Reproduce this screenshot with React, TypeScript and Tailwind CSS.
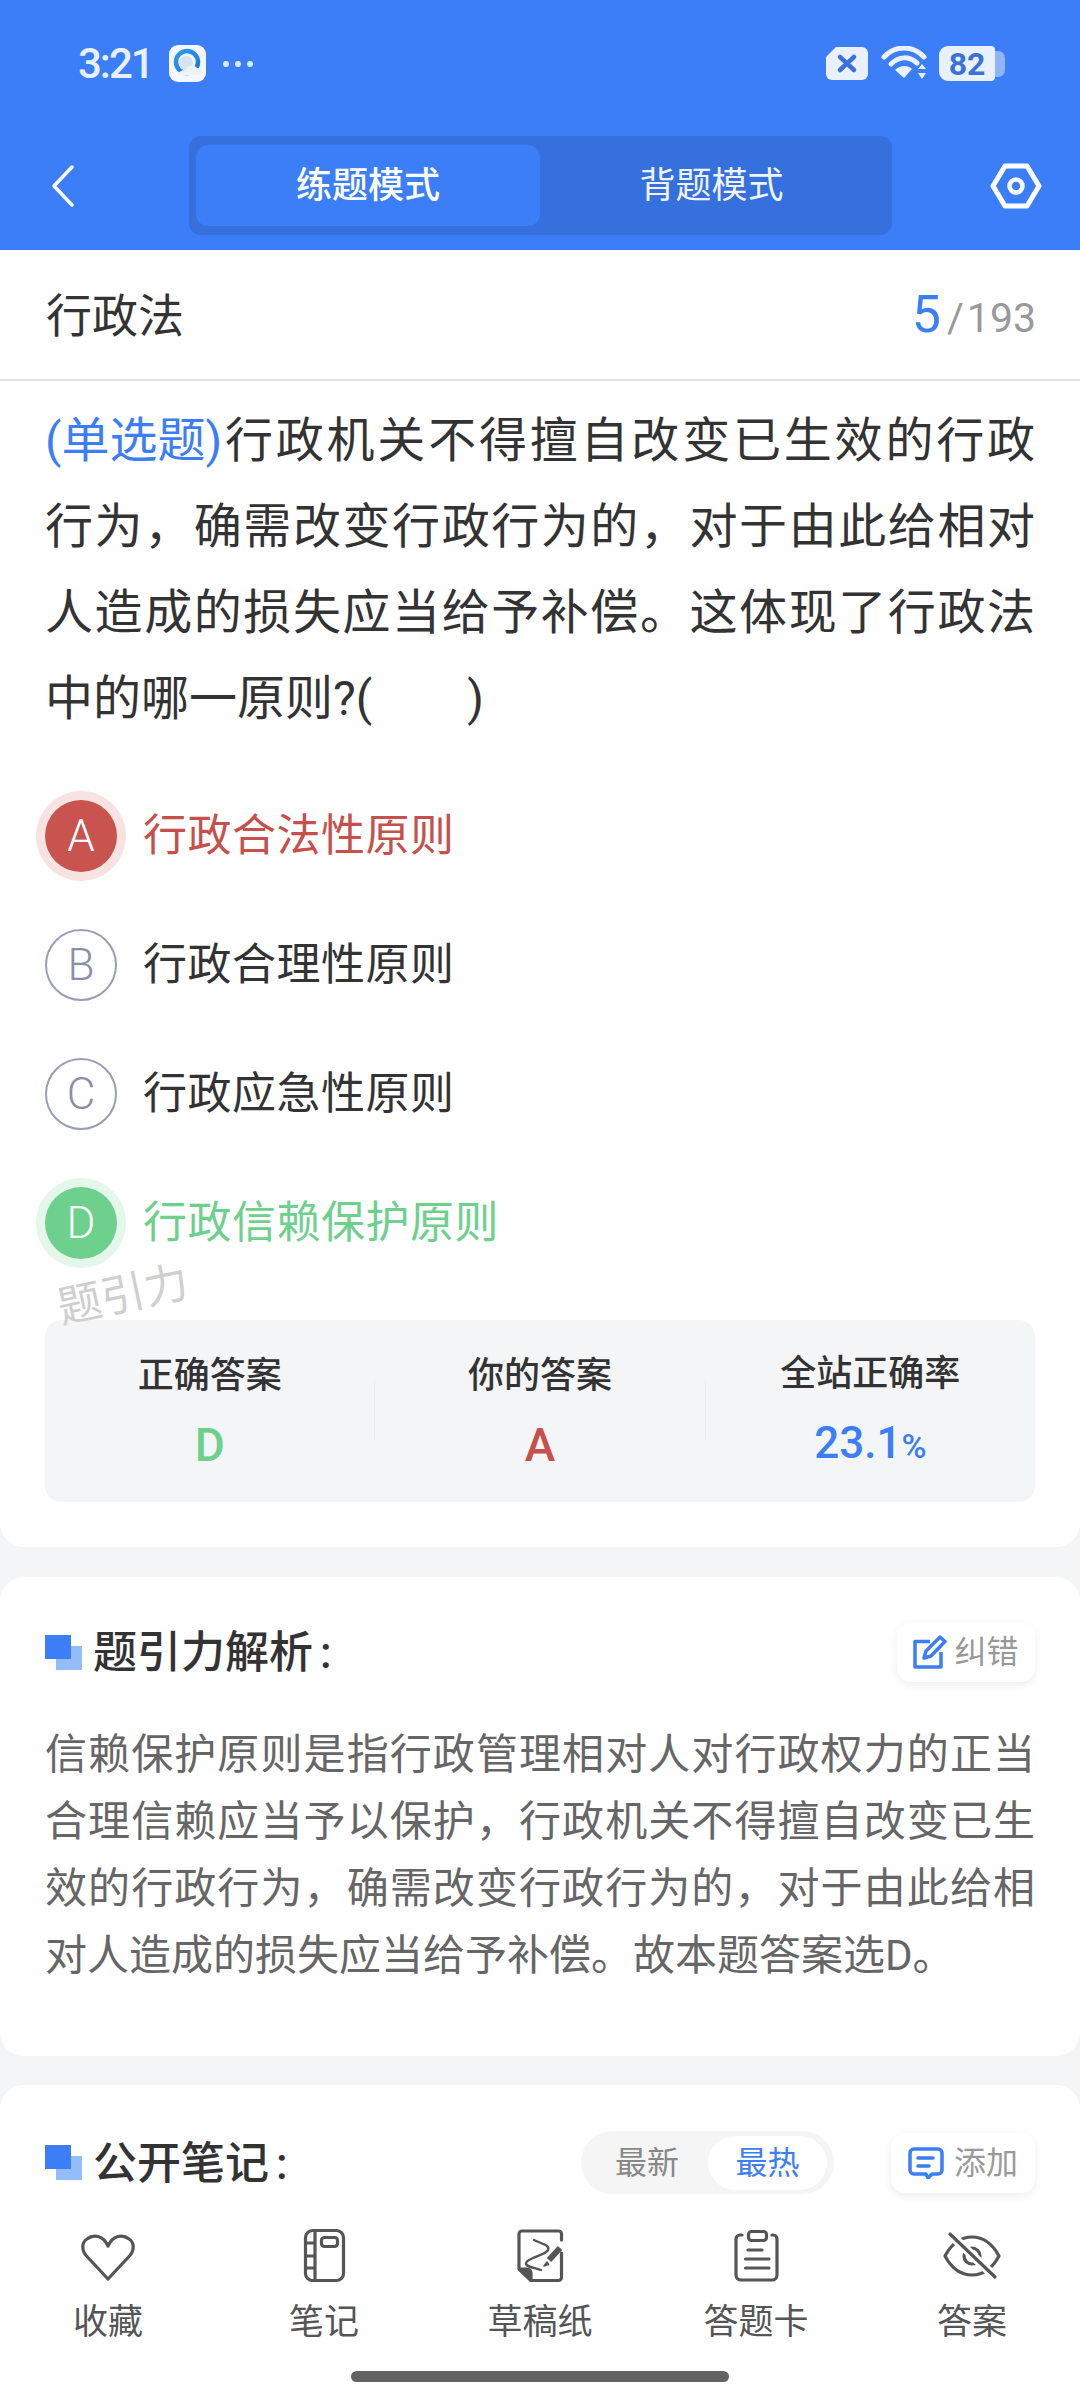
import React from "react";

const Squares = () => (
  <span className="relative block w-[37px] h-[35px] shrink-0">
    <span className="absolute left-[11px] top-[11px] w-[26px] h-[24px] bg-[#93BCFA]" />
    <span className="absolute left-0 top-0 w-[26px] h-[24px] bg-[#3B7EF7]" />
  </span>
);

const SectionTitle = ({ children }: { children: React.ReactNode }) => (
  <div className="flex items-center gap-[11px]">
    <Squares />
    <span className="mt-[2px] text-[44px] leading-[60px] font-medium text-[#333]">
      {children}
      <span className="ml-[7px]">:</span>
    </span>
  </div>
);

const OPTIONS = [
  { k: "A", t: "行政合法性原则", c: "bg-[#C9534F] text-white ring-[9px] ring-[#F6E3E2]", tc: "text-[#C5504C]" },
  { k: "B", t: "行政合理性原则", c: "border-2 border-[#9A9EB3] text-[#8B8FA6]", tc: "text-[#333]" },
  { k: "C", t: "行政应急性原则", c: "border-2 border-[#9A9EB3] text-[#8B8FA6]", tc: "text-[#333]" },
  { k: "D", t: "行政信赖保护原则", c: "bg-[#6ED08D] text-white ring-[9px] ring-[#E4F7EA]", tc: "text-[#6ED08D]" },
];

const Heart = () => (
  <svg width="60" height="60" viewBox="0 0 60 60" fill="none" stroke="#555" strokeWidth="3.2" strokeLinejoin="round">
    <path d="M30 54 L8.5 31 C3 25 4 17 9 14 C15 9 25 10 30 21 C35 10 45 9 51 14 C56 17 57 25 51.5 31 Z" />
  </svg>
);
const Notebook = () => (
  <svg width="60" height="60" viewBox="0 0 60 60" fill="none" stroke="#555" strokeWidth="3.2" strokeLinejoin="round">
    <rect x="11.5" y="5.5" width="38" height="50" rx="7" />
    <path d="M21 6V55M11.5 18H21M11.5 31H21M11.5 43H21" />
    <rect x="27.5" y="12.5" width="16" height="9" rx="3" />
  </svg>
);
const Sketch = () => (
  <svg width="60" height="60" viewBox="0 0 60 60" fill="none" stroke="#555" strokeWidth="3.2" strokeLinejoin="round" strokeLinecap="round">
    <path d="M51.5 15V9a3 3 0 0 0-3-3H12a3 3 0 0 0-3 3V44L21 55.500H48.500a3 3 0 0 0 3-3V28" />
    <path d="M9.500 44H17a4 4 0 0 1 4 4v7z" fill="#555" />
    <path d="M24 15C32 19 40 20 38 25C36 30 17 33 16 38C15 42 26 43 31 45" strokeWidth="2.4" />
    <path d="M50 23L39 35" strokeWidth="6" strokeLinecap="butt" />
    <path d="M37 37L34 41L38.500 39.500z" fill="#555" strokeWidth="1.500" />
  </svg>
);
const Clipboard = () => (
  <svg width="60" height="60" viewBox="0 0 60 60" fill="none" stroke="#555" strokeWidth="3.2" strokeLinecap="round" strokeLinejoin="round">
    <path d="M16 10H14a4 4 0 0 0-4 4V50a5 5 0 0 0 5 5H46a5 5 0 0 0 5-5V14a4 4 0 0 0-4-4H46" />
    <rect x="22.500" y="6.500" width="18" height="9" rx="3" />
    <path d="M22 25H36M19.500 34H43M19.500 43H43" />
  </svg>
);
const EyeOff = () => (
  <svg width="60" height="60" viewBox="0 0 60 60" fill="none" stroke="#555" strokeWidth="3.2" strokeLinejoin="round">
    <path d="M3 31C10 18 20 12 30 12C40 12 50 18 57 31C50 44 40 50 30 50C20 50 10 44 3 31Z" />
    <circle cx="30" cy="31" r="8" />
    <path d="M8 9L53 52" stroke="#fff" strokeWidth="9" />
    <path d="M8 9L53 52" strokeLinecap="round" />
  </svg>
);

const NAV = [
  { t: "收藏", I: Heart },
  { t: "笔记", I: Notebook },
  { t: "草稿纸", I: Sketch },
  { t: "答题卡", I: Clipboard },
  { t: "答案", I: EyeOff },
];

const AppIcon = () => (
  <svg width="37" height="37" viewBox="0 0 37 37">
    <defs>
      <linearGradient id="g1" x1="0" y1="0" x2="1" y2="1">
        <stop offset="0" stopColor="#2F9BEF" />
        <stop offset="1" stopColor="#1C74E0" />
      </linearGradient>
    </defs>
    <rect width="37" height="37" rx="9" fill="#F4F8FE" />
    <circle cx="18" cy="17" r="11" fill="none" stroke="url(#g1)" strokeWidth="4.500" />
    <circle cx="17" cy="18" r="7" fill="#D8E4F2" />
    <path d="M9 30C9 26 14 25 17 25C18 21 25 19 28 23C32 23 34 26 33 30Z" fill="#EEF3F9" />
  </svg>
);

const StatusRight = () => (
  <div className="flex items-center h-[37px]">
    <svg width="44" height="35" viewBox="0 0 44 35">
      <path d="M11 1H37a6 6 0 0 1 6 6V28a6 6 0 0 1-6 6H7a6 6 0 0 1-6-6V11z" fill="#EAF1FE" />
      <path d="M15 11L29 24M29 11L15 24" stroke="#3B72DA" strokeWidth="4.500" strokeLinecap="round" />
    </svg>
    <svg className="ml-[12px]" width="47" height="35" viewBox="0 0 47 35" fill="none">
      <path d="M3 11C14 -1 32 -1 43 11" stroke="#EAF1FE" strokeWidth="5" strokeLinecap="round" />
      <path d="M10 18C18 10 28 10 36 17" stroke="#EAF1FE" strokeWidth="5" strokeLinecap="round" />
      <path d="M14 24C19 19 27 19 31 23L23 32z" fill="#EAF1FE" />
      <path d="M37 23L41 18L45 23zM37 27L41 33L45 27z" fill="#EAF1FE" />
    </svg>
    <div className="ml-[11px] w-[66px] h-[35px] flex items-center">
      <div className="w-[56px] h-[35px] rounded-l-[9px] rounded-r-[4px] bg-[#EAF1FE] flex items-center justify-center text-[32px] leading-none font-bold text-[#3B72DA]">
        82
      </div>
      <div className="w-[10px] h-[26px] rounded-r-[7px] bg-[#8FB5F8]" />
    </div>
  </div>
);

export default function App() {
  return (
    <div className="w-[1080px] h-[2400px] flex flex-col overflow-hidden bg-[#F4F5F7] font-['Roboto','Noto_Sans_CJK_SC',sans-serif]">
      <header className="h-[250px] shrink-0 bg-[#3B7EF7] flex flex-col">
        <div className="h-[136px] pt-[45px] pl-[78px] pr-[75px] flex items-start justify-between">
          <div className="flex items-center h-[37px]">
            <span className="w-[73px] text-[42px] leading-none font-medium tracking-[-2px] whitespace-nowrap text-[#E8F0FE]">3:21</span>
            <span className="ml-[18px]"><AppIcon /></span>
            <span className="ml-[17px] flex gap-[6px]">
              <i className="block w-[6px] h-[6px] rounded-full bg-[#DCE8FD]" />
              <i className="block w-[6px] h-[6px] rounded-full bg-[#DCE8FD]" />
              <i className="block w-[6px] h-[6px] rounded-full bg-[#DCE8FD]" />
            </span>
          </div>
          <StatusRight />
        </div>
        <div className="flex items-center pl-[50px] pr-[38px]">
          <svg width="26" height="44" viewBox="0 0 26 44" fill="none" stroke="#fff" strokeWidth="3.5" strokeLinecap="round" strokeLinejoin="round">
            <path d="M22 3L4 22L22 41" />
          </svg>
          <div className="ml-[113px] flex w-[703px] h-[99px] p-[9px] pl-[7px] rounded-[12px] bg-[#3570DC]">
            <div className="w-[344px] h-[81px] rounded-[12px] bg-[#3B7EF7] flex items-center justify-center text-[36px] font-medium text-white">练题模式</div>
            <div className="flex-1 flex items-center justify-center text-[36px] text-[#EEF3FE]">背题模式</div>
          </div>
          <svg className="ml-auto" width="52" height="48" viewBox="0 0 52 48" fill="none" stroke="#fff" strokeWidth="5" strokeLinejoin="round">
            <path d="M15 4H37L49 24L37 44H15L3 24Z" />
            <circle cx="26" cy="24" r="6.500" strokeWidth="4.500" />
          </svg>
        </div>
      </header>

      <main className="flex-1 min-h-0 overflow-hidden flex flex-col">
        <section className="bg-white rounded-b-[24px] shrink-0">
          <div className="h-[131px] border-b-2 border-[#E2E2E2] pl-[46px] pr-[44px] flex items-center justify-between">
            <span className="mt-[3px] text-[46px] text-[#333]">行政法</span>
            <span className="flex items-baseline">
              <span className="text-[52px] text-[#3B7EF7]">5</span>
              <span className="text-[41px] text-[#999] ml-[6px]">/</span>
              <span className="text-[41px] text-[#999] ml-[3px]">193</span>
            </span>
          </div>
          <div className="px-[45px] pt-[17px] pb-[45px]">
            <p className="text-[48px] leading-[86px] text-[#333] text-justify">
              <span className="inline-block text-[#3B7EF7]">(单选题)</span>
              行政机关不得擅自改变已生效的行政行为，确需改变行政行为的，对于由此给相对人造成的损失应当给予补偿。这体现了行政法中的哪一原则?(&nbsp;&nbsp;&nbsp;&nbsp;&nbsp;&nbsp;&nbsp;&nbsp;)
            </p>
            <div className="mt-[29px] flex flex-col">
              {OPTIONS.map((o) => (
                <div key={o.k} className="h-[129px] flex items-center gap-[26px]">
                  <span className={"w-[72px] h-[72px] rounded-full flex items-center justify-center text-[44px] font-light " + o.c}>{o.k}</span>
                  <span className={"text-[44px] tracking-[0.5px] " + o.tc}>{o.t}</span>
                </div>
              ))}
            </div>
            <div className="relative mt-[33px] h-[182px] rounded-[16px] bg-[#F4F5F7] flex items-center">
              <span className="absolute left-[12px] top-[-50px] -rotate-12 text-[44px] leading-[50px] text-[#CFCFCF]">题引力</span>
              <div className="flex-1 flex flex-col items-center">
                <span className="mt-[2px] text-[36px] leading-[44px] font-medium text-[#333]">正确答案</span>
                <span className="mt-[21px] text-[46px] leading-[52px] font-medium text-[#6ED08D]">D</span>
              </div>
              <i className="block w-px h-[60px] bg-[#ECEDEF]" />
              <div className="flex-1 flex flex-col items-center">
                <span className="mt-[2px] text-[36px] leading-[44px] font-medium text-[#333]">你的答案</span>
                <span className="mt-[21px] text-[46px] leading-[52px] font-medium text-[#C5504C]">A</span>
              </div>
              <i className="block w-px h-[60px] bg-[#ECEDEF]" />
              <div className="flex-1 flex flex-col items-center">
                <span className="mt-[2px] text-[36px] leading-[44px] font-medium text-[#333]">全站正确率</span>
                <span className="mt-[21px] text-[44px] leading-[52px] font-medium text-[#3B7EF7]">
                  23.1<span className="text-[34px]">%</span>
                </span>
              </div>
            </div>
          </div>
        </section>

        <section className="mt-[30px] bg-white rounded-[24px] h-[479px] shrink-0 pl-[45px] pr-[45px] pt-[45px]">
          <div className="flex items-center justify-between h-[60px]">
            <SectionTitle>题引力解析</SectionTitle>
            <button className="w-[138px] h-[60px] rounded-[14px] bg-white shadow-[0_3px_10px_rgba(0,0,0,0.07)] flex items-center justify-center gap-[7px]">
              <svg width="34" height="34" viewBox="0 0 34 34" fill="none" stroke="#3B7EF7" strokeWidth="3.5" strokeLinejoin="round">
                <path d="M17 6.500H2V32H28V17" />
                <path d="M27 2L32 6.500L18 21L11 23L13 16Z" />
              </svg>
              <span className="text-[32px] leading-none text-[#999]">纠错</span>
            </button>
          </div>
          <p className="mt-[39px] text-[42px] leading-[67px] text-[#666] text-justify">
            信赖保护原则是指行政管理相对人对行政权力的正当合理信赖应当予以保护，行政机关不得擅自改变已生效的行政行为，确需改变行政行为的，对于由此给相对人造成的损失应当给予补偿。故本题答案选D。
          </p>
        </section>

        <section className="mt-[29px] bg-white rounded-t-[24px] flex-1 pl-[45px] pr-[45px] pt-[46px]">
          <div className="flex items-center h-[63px]">
            <SectionTitle>公开笔记</SectionTitle>
            <div className="ml-auto w-[253px] h-[63px] rounded-full bg-[#F5F5F5] flex items-center pl-[34px] pr-[7px]">
              <span className="text-[32px] text-[#888]">最新</span>
              <span className="ml-auto w-[119px] h-[54px] rounded-full bg-white flex items-center justify-center text-[32px] text-[#3B7EF7]">最热</span>
            </div>
            <button className="ml-[57px] w-[144px] h-[60px] rounded-[14px] bg-white shadow-[0_3px_10px_rgba(0,0,0,0.07)] flex items-center justify-center gap-[10px]">
              <svg width="36" height="32" viewBox="0 0 36 32" fill="none" stroke="#3B7EF7" strokeWidth="3.5" strokeLinejoin="round" strokeLinecap="round">
                <path d="M6 2H30a4 4 0 0 1 4 4V23a4 4 0 0 1-4 4H24L20 31L18 27H6a4 4 0 0 1-4-4V6a4 4 0 0 1 4-4Z" />
                <path d="M10 11H25M10 19H21" />
              </svg>
              <span className="text-[32px] leading-none text-[#999]">添加</span>
            </button>
          </div>
        </section>
      </main>

      <nav className="h-[185px] shrink-0 bg-white flex flex-col">
        <div className="grid grid-cols-5 pt-[10px]">
          {NAV.map(({ t, I }) => (
            <div key={t} className="flex flex-col items-center">
              <I />
              <span className="mt-[16px] text-[35px] leading-[44px] text-[#555]">{t}</span>
            </div>
          ))}
        </div>
        <div className="mt-auto mb-[18px] mx-auto w-[378px] h-[11px] rounded-full bg-[#636363]" />
      </nav>
    </div>
  );
}
